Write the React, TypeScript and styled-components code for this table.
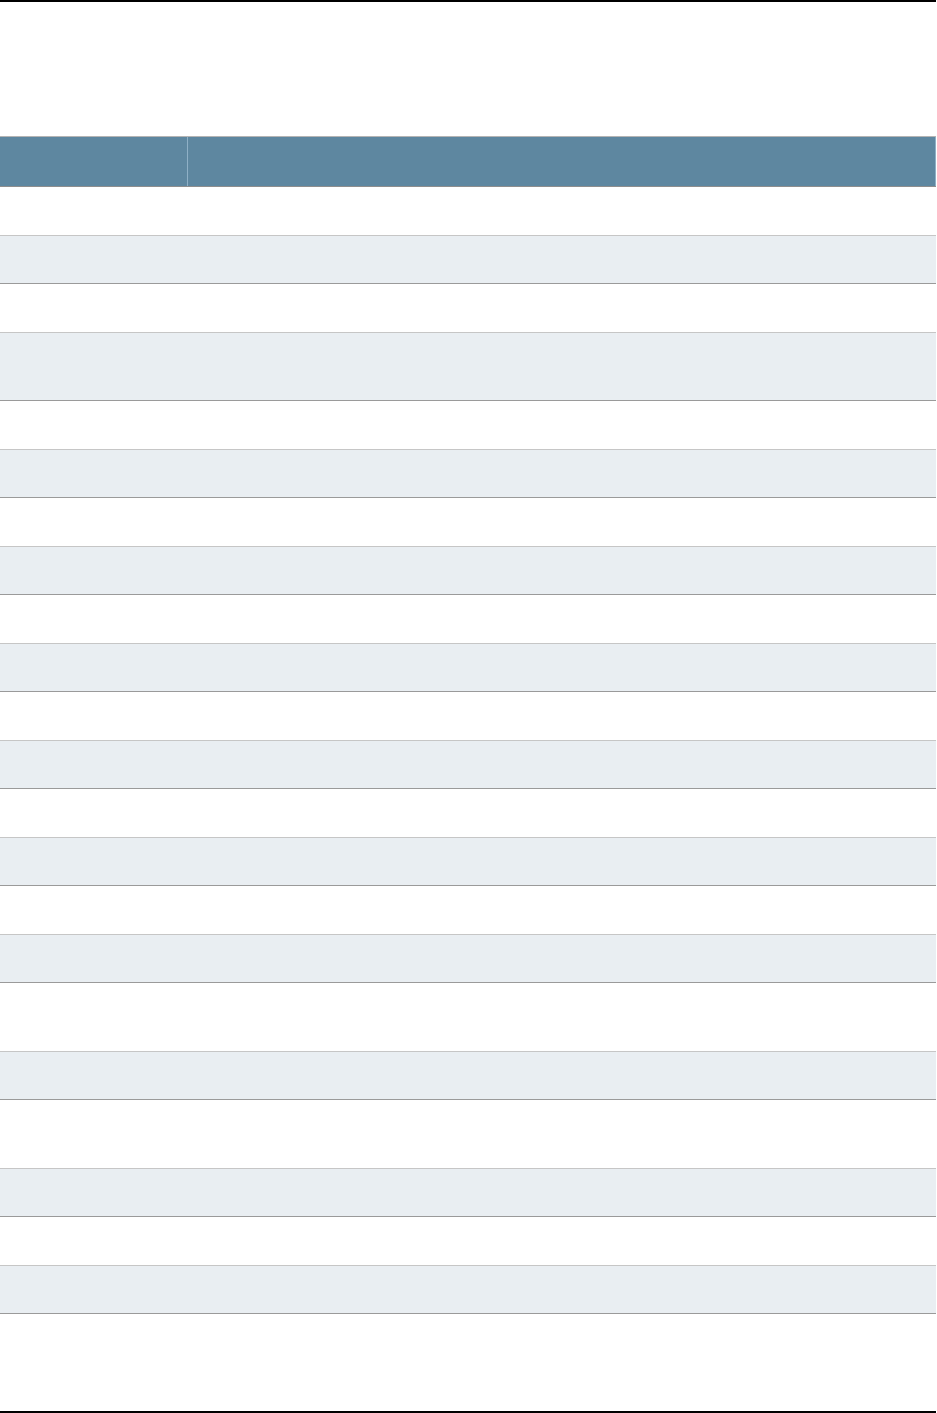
import React from "react";
import styled, { createGlobalStyle } from "styled-components";

const Global = createGlobalStyle`
  html, body { margin: 0; padding: 0; background: #ffffff; }
  body { font-family: "Liberation Sans", Arial, sans-serif; }
  * { box-sizing: border-box; }
`;

const Page = styled.div`
  width: 936px;
  height: 1413px;
  display: flex;
  flex-direction: column;
  border-top: 2px solid #000000;
  border-bottom: 2px solid #000000;
  background: #ffffff;
`;

const Table = styled.div`
  margin-top: 134px;
  width: 936px;
  display: flex;
  flex-direction: column;
`;

const HeadRow = styled.div`
  display: grid;
  grid-template-columns: 187px 1fr;
  height: 51px;
  background: #5e87a0;
  border-top: 1px solid #b4b4b4;
  border-bottom: 1px solid #8e8e8e;
`;

const HeadCell = styled.div<{ $divider?: boolean }>`
  color: #ffffff;
  font-size: 13px;
  font-weight: bold;
  padding: 0 8px;
  border-left: ${(p) => (p.$divider ? "1px solid #8fb0c6" : "none")};
  border-right: ${(p) => (p.$divider ? "1px solid #8fb0c6" : "none")};
`;

const Row = styled.div<{ $shaded: boolean; $tall: boolean }>`
  display: grid;
  grid-template-columns: 187px 1fr;
  height: ${(p) => (p.$tall ? "68.5px" : "48.5px")};
  background: ${(p) => (p.$shaded ? "#e9eef2" : "#ffffff")};
  border-bottom: 1px solid ${(p) => (p.$shaded ? "#9a9a9a" : "#c6c6c6")};
`;

const Cell = styled.div`
  font-size: 13px;
  color: #333333;
  padding: 0 8px;
`;

const tallRows = new Set([3, 16, 18]);
const rows = Array.from({ length: 22 }, (_, i) => i);

export default function App() {
  return (
    <>
      <Global />
      <Page>
        <Table>
          <HeadRow>
            <HeadCell />
            <HeadCell $divider />
          </HeadRow>
          {rows.map((i) => (
            <Row key={i} $shaded={i % 2 === 1} $tall={tallRows.has(i)}>
              <Cell />
              <Cell />
            </Row>
          ))}
        </Table>
      </Page>
    </>
  );
}
